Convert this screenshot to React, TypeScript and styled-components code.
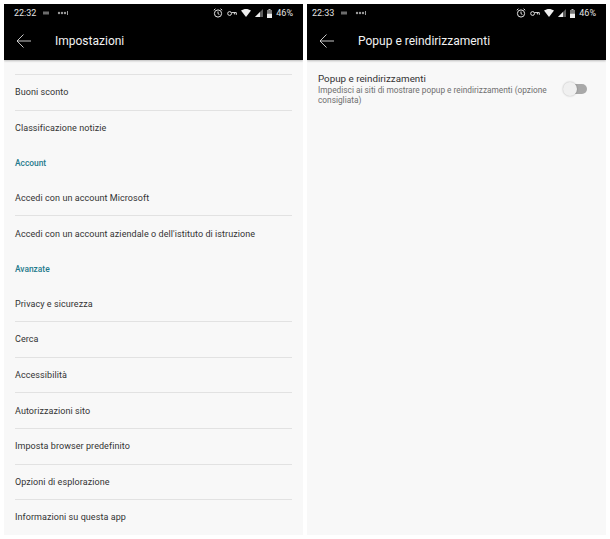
import styled, { createGlobalStyle } from 'styled-components';

const GlobalStyle = createGlobalStyle`
  html, body {
    margin: 0;
    background: #ffffff;
    font-family: Roboto, "Liberation Sans", sans-serif;
  }
`;

const Page = styled.div`
  display: flex;
  gap: 4px;
  width: 610px;
  height: 539px;
  padding: 4px;
  box-sizing: border-box;
  overflow: hidden;
`;

const Phone = styled.section`
  width: 299px;
  height: 531px;
  flex: none;
  display: flex;
  flex-direction: column;
  background: #f8f8f8;
  overflow: hidden;
`;

const TopArea = styled.header`
  height: 56px;
  flex: none;
  background: #000000;
  color: #ffffff;
  box-shadow: 0 1px 2px rgba(0, 0, 0, 0.25);
`;

const StatusBar = styled.div`
  display: flex;
  align-items: center;
  height: 18px;
  padding: 0 10px 0 ${(p: { $left: number }) => p.$left}px;
  font-size: 9px;
  color: #e2e2e2;
`;

const Clock = styled.span`
  width: 29px;
`;

const StatusRight = styled.div`
  margin-left: auto;
  display: flex;
  align-items: center;
  gap: 4px;
`;

const TitleBar = styled.div`
  display: flex;
  align-items: center;
  height: 38px;
  padding-left: 12px;
`;

const Title = styled.h1`
  margin: 0 0 0 24px;
  font-size: 12px;
  font-weight: 400;
  letter-spacing: 0;
  color: #f2f2f2;
`;

const SettingsList = styled.div`
  margin: 14px 11px 0;
  border-top: 1px solid #e2e2e2;
`;

const Row = styled.div<{ $divider?: boolean }>`
  display: flex;
  align-items: center;
  height: 35.6px;
  box-sizing: border-box;
  font-size: 9px;
  letter-spacing: 0.07px;
  color: #333333;
  border-bottom: ${(p) => (p.$divider === false ? 'none' : '1px solid #e2e2e2')};
`;

const SectionHeader = styled.div`
  display: flex;
  align-items: center;
  height: 34.6px;
  font-size: 8.4px;
  font-weight: 500;
  color: #1f7a8c;
`;

const ToggleRow = styled.div`
  display: flex;
  align-items: flex-start;
  justify-content: space-between;
  padding: 12px 19px 0 11px;
`;

const ToggleText = styled.div`
  width: 232px;
`;

const ToggleTitle = styled.div`
  font-size: 9.8px;
  line-height: 13px;
  color: #333333;
`;

const ToggleHint = styled.div`
  font-size: 8.3px;
  line-height: 10px;
  color: #6f6f6f;
`;

const Track = styled.div`
  position: relative;
  width: 22px;
  height: 10px;
  margin-top: 12px;
  border-radius: 5px;
  background: #a9a9a9;
`;

const Thumb = styled.div`
  position: absolute;
  left: -2px;
  top: -2px;
  width: 14px;
  height: 14px;
  border-radius: 50%;
  background: #f0f0f0;
  box-shadow: 0 0 2px rgba(0, 0, 0, 0.3);
`;

function BackArrow() {
  return (
    <svg width="15" height="14" viewBox="0 0 15 14" fill="none" stroke="#dcdcdc" strokeWidth="0.9">
      <path d="M15 7H1M7.5 0.5L1 7l6.5 6.5" />
    </svg>
  );
}

function MiniIcons() {
  return (
    <svg width="26" height="6" viewBox="0 0 26 6" fill="#9a9a9a">
      <rect x="0" y="1.5" width="6" height="3" opacity="0.7" />
      <circle cx="16" cy="3" r="1.2" />
      <circle cx="19" cy="3" r="1.2" />
      <circle cx="22" cy="3" r="1.2" />
      <rect x="24" y="1" width="1" height="4" />
    </svg>
  );
}

function Alarm() {
  return (
    <svg width="10" height="10" viewBox="0 0 10 10" fill="none" stroke="#e6e6e6" strokeWidth="1">
      <circle cx="5" cy="5.5" r="3.6" />
      <path d="M5 3.5v2.2l1.4.8M0.8 2.2L2.4 0.8M9.2 2.2L7.6 0.8" />
    </svg>
  );
}

function VpnKey() {
  return (
    <svg width="10" height="7" viewBox="0 0 10 7" fill="none" stroke="#e0e0e0" strokeWidth="1">
      <circle cx="2.6" cy="3.5" r="1.9" />
      <path d="M4.5 2.6h4.8v2.2M7.4 2.6v1.8" />
    </svg>
  );
}

function Wifi() {
  return (
    <svg width="10" height="8" viewBox="0 0 10 8" fill="#eeeeee">
      <path d="M0 1.6C3-.5 7-.5 10 1.6L5 8z" />
    </svg>
  );
}

function Signal() {
  return (
    <svg width="8" height="8" viewBox="0 0 8 8">
      <path d="M8 0v8H0z" fill="#5c5c5c" />
      <path d="M5 3v5H0z" fill="#eeeeee" />
    </svg>
  );
}

function Battery() {
  return (
    <svg width="5" height="9" viewBox="0 0 5 9">
      <rect x="1.5" y="0" width="2" height="1" fill="#bbbbbb" />
      <rect x="0" y="1" width="5" height="3.5" fill="#777777" />
      <rect x="0" y="4.5" width="5" height="4.5" fill="#eeeeee" />
    </svg>
  );
}

function Status({ time, left }: { time: string; left: number }) {
  return (
    <StatusBar $left={left}>
      <Clock>{time}</Clock>
      <MiniIcons />
      <StatusRight>
        <Alarm />
        <VpnKey />
        <Wifi />
        <Signal />
        <Battery />
        <span>46%</span>
      </StatusRight>
    </StatusBar>
  );
}

function App() {
  return (
    <Page>
      <GlobalStyle />
      <Phone>
        <TopArea>
          <Status time="22:32" left={10} />
          <TitleBar>
            <BackArrow />
            <Title>Impostazioni</Title>
          </TitleBar>
        </TopArea>
        <SettingsList>
          <Row>Buoni sconto</Row>
          <Row $divider={false}>Classificazione notizie</Row>
          <SectionHeader>Account</SectionHeader>
          <Row>Accedi con un account Microsoft</Row>
          <Row $divider={false}>Accedi con un account aziendale o dell'istituto di istruzione</Row>
          <SectionHeader>Avanzate</SectionHeader>
          <Row>Privacy e sicurezza</Row>
          <Row>Cerca</Row>
          <Row>Accessibilità</Row>
          <Row>Autorizzazioni sito</Row>
          <Row>Imposta browser predefinito</Row>
          <Row>Opzioni di esplorazione</Row>
          <Row>Informazioni su questa app</Row>
        </SettingsList>
      </Phone>
      <Phone>
        <TopArea>
          <Status time="22:33" left={5} />
          <TitleBar>
            <BackArrow />
            <Title>Popup e reindirizzamenti</Title>
          </TitleBar>
        </TopArea>
        <ToggleRow>
          <ToggleText>
            <ToggleTitle>Popup e reindirizzamenti</ToggleTitle>
            <ToggleHint>Impedisci ai siti di mostrare popup e reindirizzamenti (opzione consigliata)</ToggleHint>
          </ToggleText>
          <Track>
            <Thumb />
          </Track>
        </ToggleRow>
      </Phone>
    </Page>
  );
}

export default App;
